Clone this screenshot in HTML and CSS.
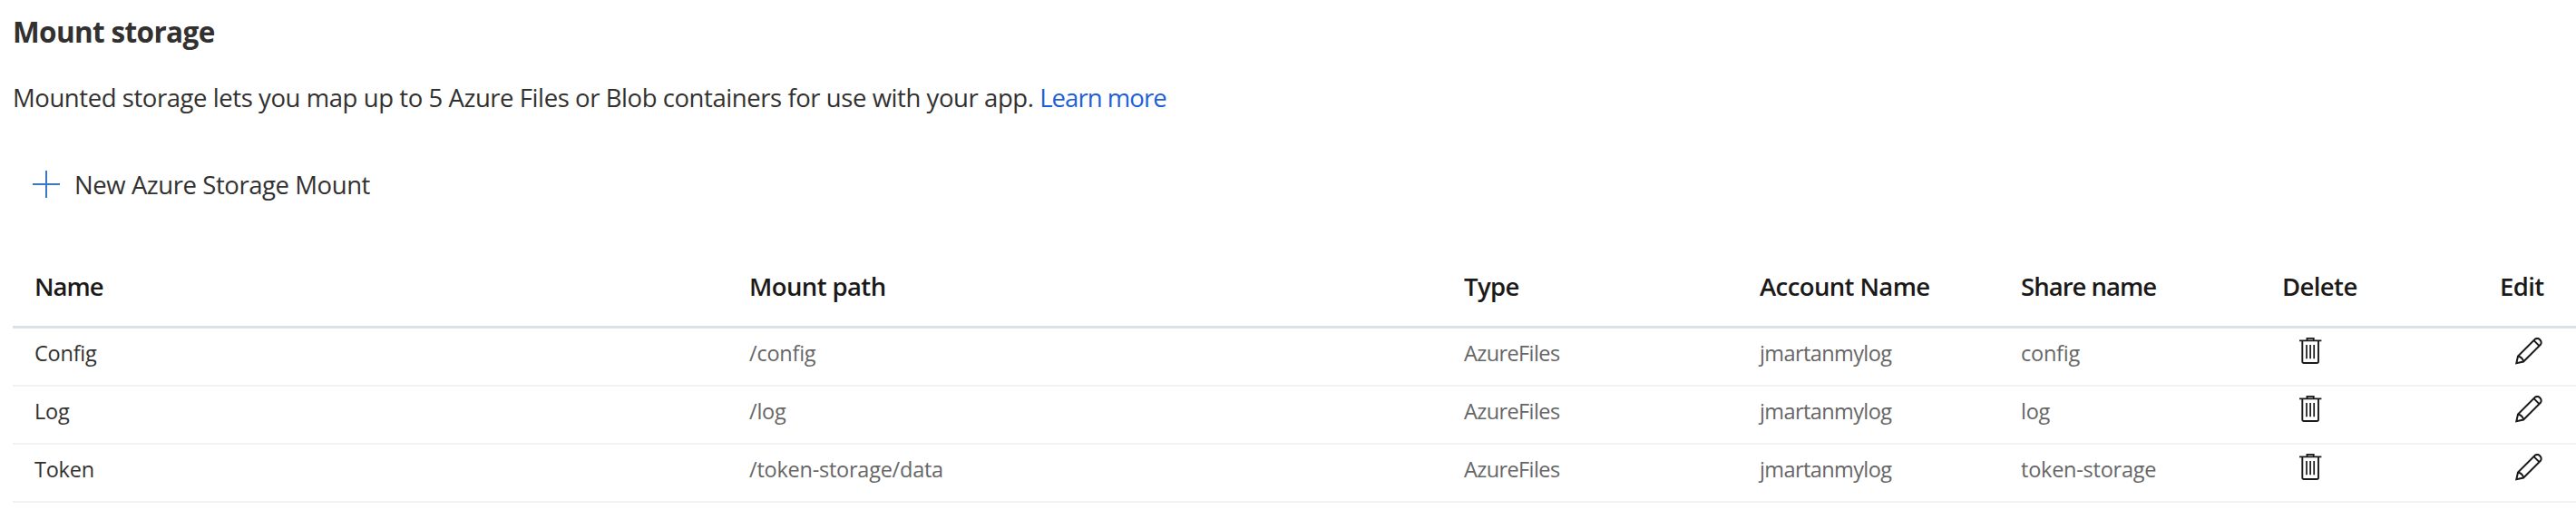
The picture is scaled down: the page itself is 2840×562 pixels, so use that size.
FILE: index.html
```
<!DOCTYPE html>
<html lang="en">
<head>
<meta charset="utf-8">
<title>Mount storage</title>
<link rel="stylesheet" href="styles.css">
</head>
<body>
<svg class="defs" width="0" height="0">
  <symbol id="trash" viewBox="0 0 25 29">
    <path d="M8.5 3V0.9H15.7V3M0 3.4H24.4M3.3 3.4V26.2Q3.3 28 5.1 28H19.2Q21 28 21 26.2V3.4" stroke-width="1.9"/>
    <path d="M8 8V23.3M12.1 8V23.3M16.2 8V23.3" stroke-width="1.7"/>
  </symbol>
  <symbol id="pencil" viewBox="0 0 31 30">
    <path d="M1.3 28.2L3 20.5L21.8 1.8Q24.6 -0.2 27.2 2.2Q29.8 5 27.8 7.8L9.1 26.5ZM3 20.5Q8 21.5 9.1 26.5M20.5 3.1L26.5 9.1" stroke-width="2"/>
  </symbol>
</svg>
<main>
  <h1 class="title">Mount storage</h1>
  <p class="description">Mounted storage lets you map up to 5 Azure Files or Blob containers for use with your app. <a class="link">Learn more</a></p>
  <div class="commands">
    <svg class="plus" viewBox="0 0 30 30"><path d="M15 0V30M0 15H30"/></svg>
    <span class="label">New Azure Storage Mount</span>
  </div>
  <section class="table">
    <div class="row header">
      <span class="tight">Name</span><span>Mount path</span><span>Type</span><span>Account Name</span><span class="tight">Share name</span><span>Delete</span><span>Edit</span>
    </div>
    <div class="row">
      <span class="name">Config</span><span>/config</span><span class="narrow">AzureFiles</span><span class="narrow">jmartanmylog</span><span>config</span>
      <svg class="trash"><use href="#trash"/></svg><svg class="pencil"><use href="#pencil"/></svg>
    </div>
    <div class="row">
      <span class="name">Log</span><span>/log</span><span class="narrow">AzureFiles</span><span class="narrow">jmartanmylog</span><span>log</span>
      <svg class="trash"><use href="#trash"/></svg><svg class="pencil"><use href="#pencil"/></svg>
    </div>
    <div class="row">
      <span class="name">Token</span><span>/token-storage/data</span><span class="narrow">AzureFiles</span><span class="narrow">jmartanmylog</span><span>token-storage</span>
      <svg class="trash"><use href="#trash"/></svg><svg class="pencil"><use href="#pencil"/></svg>
    </div>
  </section>
</main>
</body>
</html>
```
FILE: styles.css
```
* { box-sizing: border-box; }
body {
  margin: 0;
  background: #fff;
  color: #323130;
  font-family: "Open Sans", "Noto Sans", sans-serif;
  font-size: 27.5px;
  letter-spacing: -0.43px;
}
.defs { display: block; }
.title {
  margin: 0;
  padding-left: 14px;
  font-size: 31.5px;
  font-weight: 700;
  line-height: 70px;
  letter-spacing: -0.65px;
}
.description { margin: 0; padding-left: 14px; line-height: 75px; }
.link { color: #1f5fd6; letter-spacing: -0.95px; }
.commands {
  display: flex;
  align-items: center;
  gap: 16px;
  height: 116px;
  padding-left: 36px;
}
.label { padding-top: 2px; line-height: 40px; }
.plus { width: 30px; height: 30px; fill: none; stroke: #3b78c4; stroke-width: 2; }
.table { margin: 11px 0 0 14px; }
.row {
  display: grid;
  grid-template-columns: 788px 788px 326px 288px 288px 240px auto;
  height: 64px;
  padding-left: 24px;
  border-bottom: 2px solid #f2f2f2;
  color: #666;
  font-size: 23.5px;
  line-height: 54px;
  letter-spacing: -0.24px;
}
.header {
  height: 90px;
  border-bottom: 3px solid #dce0e8;
  color: #1b1a19;
  font-size: 27.5px;
  font-weight: 600;
  line-height: 87px;
  letter-spacing: -0.6px;
}
.tight { letter-spacing: -0.97px; }
.narrow { letter-spacing: -0.6px; }
.name { color: #323130; }
.trash, .pencil { margin-top: 10px; fill: none; stroke: #1b1a19; }
.trash { width: 25px; height: 29px; margin-left: 19px; }
.pencil { width: 31px; height: 30px; margin-left: 17px; }
```
